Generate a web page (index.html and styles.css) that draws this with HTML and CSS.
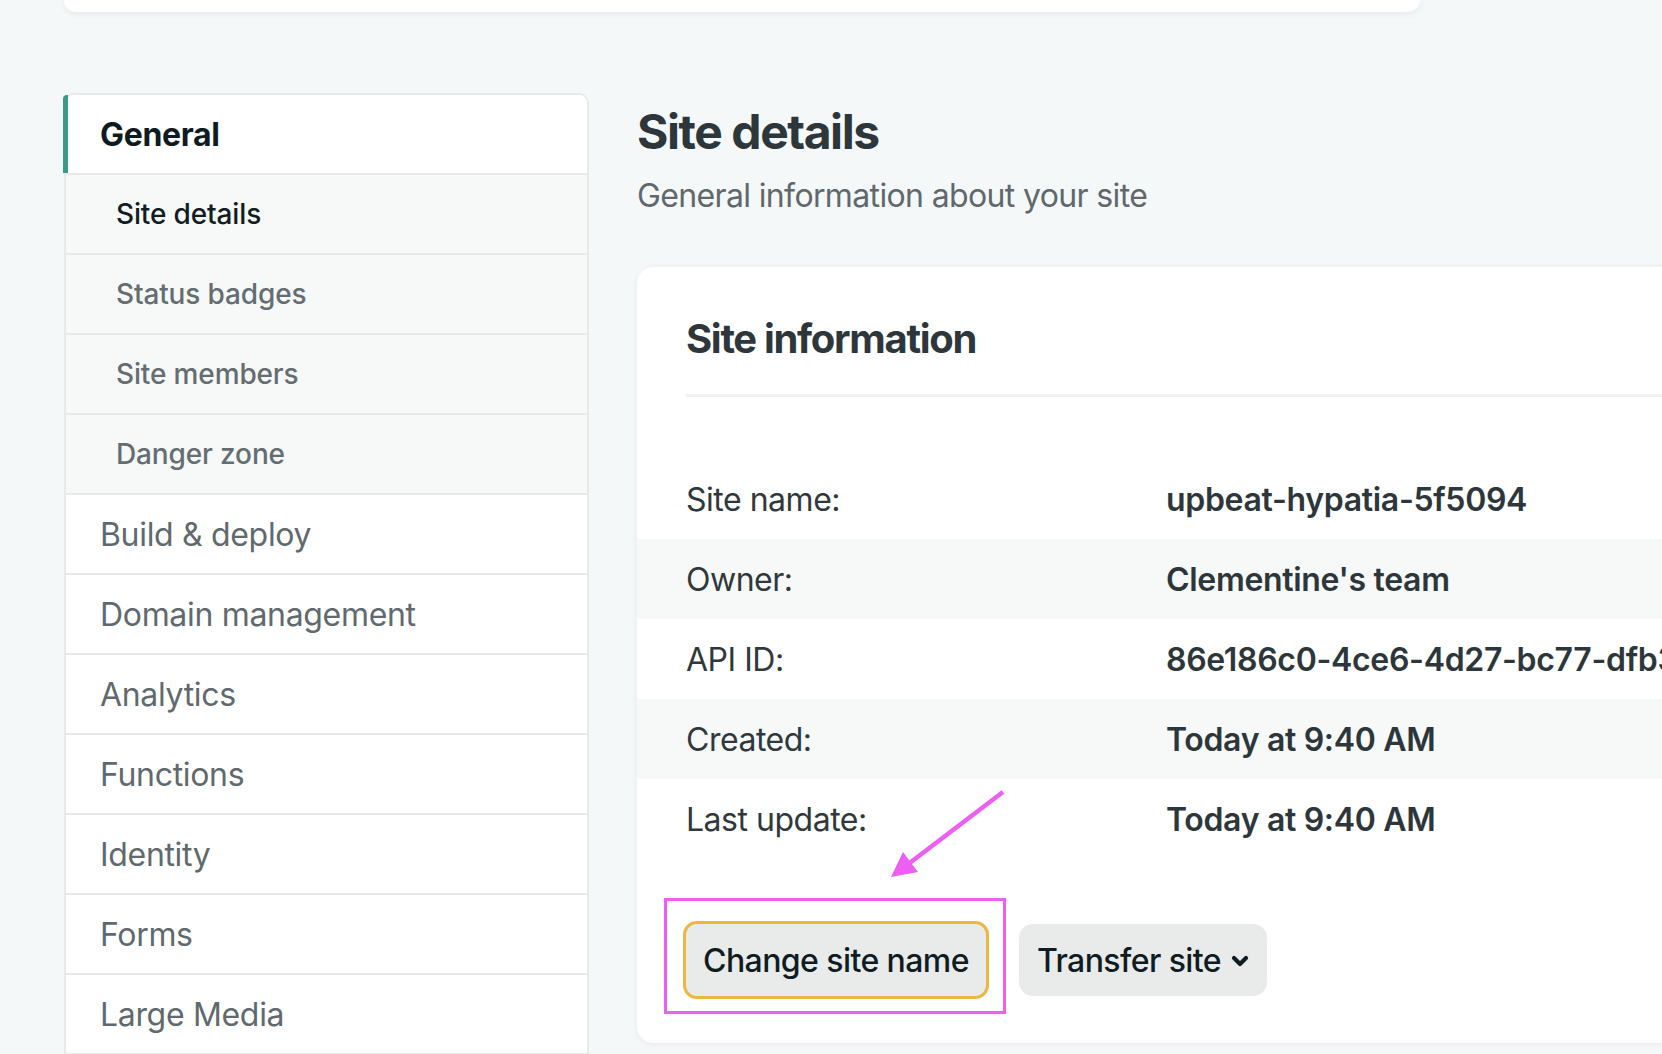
FILE: index.html
```html
<!DOCTYPE html>
<html lang="en">
<head>
<meta charset="utf-8">
<title>Site details</title>
<link rel="stylesheet" href="styles.css">
</head>
<body>
<div class="topbar"></div>
<div class="layout">
  <nav class="sidenav">
    <a class="nav-item top active">General</a>
    <a class="nav-item sub current">Site details</a>
    <a class="nav-item sub">Status badges</a>
    <a class="nav-item sub">Site members</a>
    <a class="nav-item sub">Danger zone</a>
    <a class="nav-item top">Build &amp; deploy</a>
    <a class="nav-item top">Domain management</a>
    <a class="nav-item top">Analytics</a>
    <a class="nav-item top">Functions</a>
    <a class="nav-item top">Identity</a>
    <a class="nav-item top">Forms</a>
    <a class="nav-item top">Large Media</a>
  </nav>
  <main class="main">
    <h1 class="page-title">Site details</h1>
    <p class="page-sub">General information about your site</p>
    <section class="card">
      <h2 class="card-title">Site information</h2>
      <div class="divider"></div>
      <dl class="info">
        <div class="info-row"><dt>Site name:</dt><dd>upbeat-hypatia-5f5094</dd></div>
        <div class="info-row alt"><dt>Owner:</dt><dd>Clementine's team</dd></div>
        <div class="info-row"><dt>API ID:</dt><dd>86e186c0-4ce6-4d27-bc77-dfb3a1e2c0f4</dd></div>
        <div class="info-row alt"><dt>Created:</dt><dd>Today at 9:40 AM</dd></div>
        <div class="info-row"><dt>Last update:</dt><dd>Today at 9:40 AM</dd></div>
      </dl>
      <div class="actions">
        <button class="btn btn-focus">Change site name</button>
        <button class="btn">Transfer site
          <svg class="chev" width="18" height="12" viewBox="0 0 18 12"><path d="M3 3 L9 9 L15 3" fill="none" stroke="#0f1c22" stroke-width="4.2" stroke-linecap="round" stroke-linejoin="round"/></svg>
        </button>
      </div>
    </section>
  </main>
</div>
<div class="annot-box"></div>
<svg class="annot-arrow" width="130" height="100" viewBox="0 0 130 100">
  <line x1="122" y1="2" x2="26" y2="75" stroke="#ee5ef3" stroke-width="4.5"/>
  <polygon points="10,87 22,62 37,82" fill="#ee5ef3"/>
</svg>
</body>
</html>
```
FILE: styles.css
```css
html, body {
  margin: 0;
  padding: 0;
}
body {
  background: #f5f8f9;
  font-family: Inter, "Noto Sans", "Liberation Sans", sans-serif;
  width: 1662px;
  height: 1054px;
  overflow: hidden;
  position: relative;
}
.topbar {
  margin-left: 64px;
  width: 1356px;
  height: 12px;
  background: #ffffff;
  border-radius: 0 0 12px 12px;
  box-shadow: 0 2px 6px rgba(30, 50, 60, 0.08);
}
.layout {
  display: flex;
  gap: 48px;
  padding-left: 64px;
  margin-top: 81px;
}
.sidenav {
  width: 521px;
  flex: none;
  display: flex;
  flex-direction: column;
  border: 2px solid #e8eaea;
  border-bottom: none;
  border-radius: 10px 10px 0 0;
  background: #ffffff;
}
.nav-item {
  display: flex;
  align-items: center;
  height: 78px;
  border-bottom: 2px solid #e8eaea;
  text-decoration: none;
  position: relative;
}
.nav-item.top {
  font-size: 32px;
  letter-spacing: -0.01em;
  padding-left: 34px;
  color: #5f696e;
  background: #ffffff;
}
.nav-item.top.active {
  color: #0e1b21;
  font-weight: 700;
  border-radius: 8px 8px 0 0;
}
.nav-item.top.active::before {
  content: "";
  position: absolute;
  left: -3px;
  top: 0;
  bottom: 0;
  width: 5px;
  background: #3f9786;
  border-radius: 4px 0 0 0;
}
.nav-item.sub {
  font-size: 28px;
  font-weight: 500;
  letter-spacing: -0.005em;
  padding-left: 50px;
  color: #646d72;
  background: #f7f9f9;
}
.nav-item.sub.current {
  color: #111d23;
}
.main {
  flex: none;
  padding-top: 10px;
}
.page-title {
  margin: 0;
  font-size: 48px;
  line-height: 58px;
  font-weight: 700;
  letter-spacing: -0.03em;
  color: #2d373b;
}
.page-sub {
  margin: 15px 0 0;
  font-size: 32px;
  line-height: 40px;
  letter-spacing: -0.02em;
  color: #5f686c;
}
.card {
  margin-top: 51px;
  width: 1120px;
  background: #ffffff;
  border-radius: 16px;
  box-shadow: 0 1px 6px rgba(30, 50, 60, 0.07);
  padding: 48px 0 44px;
}
.card-title {
  margin: 0 0 31px 49px;
  font-size: 40px;
  line-height: 48px;
  font-weight: 700;
  letter-spacing: -0.033em;
  color: #2d373b;
}
.divider {
  margin-left: 49px;
  height: 3px;
  background: #f0f2f2;
}
.info {
  margin: 62px 0 0;
}
.info-row {
  display: flex;
  align-items: center;
  height: 80px;
  padding-left: 49px;
  font-size: 32px;
  letter-spacing: -0.015em;
}
.info-row.alt {
  background: #f7f9f9;
}
.info-row dt {
  width: 480px;
  flex: none;
  color: #2f393d;
}
.info-row dd {
  margin: 0;
  font-weight: 600;
  letter-spacing: -0.01em;
  color: #2d373b;
  white-space: nowrap;
}
.actions {
  display: flex;
  align-items: center;
  gap: 30px;
  margin-top: 62px;
  padding-left: 46px;
}
.btn {
  display: flex;
  align-items: center;
  gap: 10px;
  height: 72px;
  padding: 0 18px;
  border: none;
  border-radius: 14px;
  background: #e9ebeb;
  font-family: Inter, "Noto Sans", "Liberation Sans", sans-serif;
  font-size: 32px;
  font-weight: 500;
  letter-spacing: -0.018em;
  color: #0f1c22;
}
.btn-focus {
  height: 78px;
  padding: 0 17px;
  border: 3px solid #ebb73e;
}
.chev {
  display: block;
  margin-top: 2px;
}
.annot-box {
  position: absolute;
  left: 664px;
  top: 898px;
  width: 336px;
  height: 110px;
  border: 3px solid #ee5ef1;
}
.annot-arrow {
  position: absolute;
  left: 881px;
  top: 790px;
}
```
